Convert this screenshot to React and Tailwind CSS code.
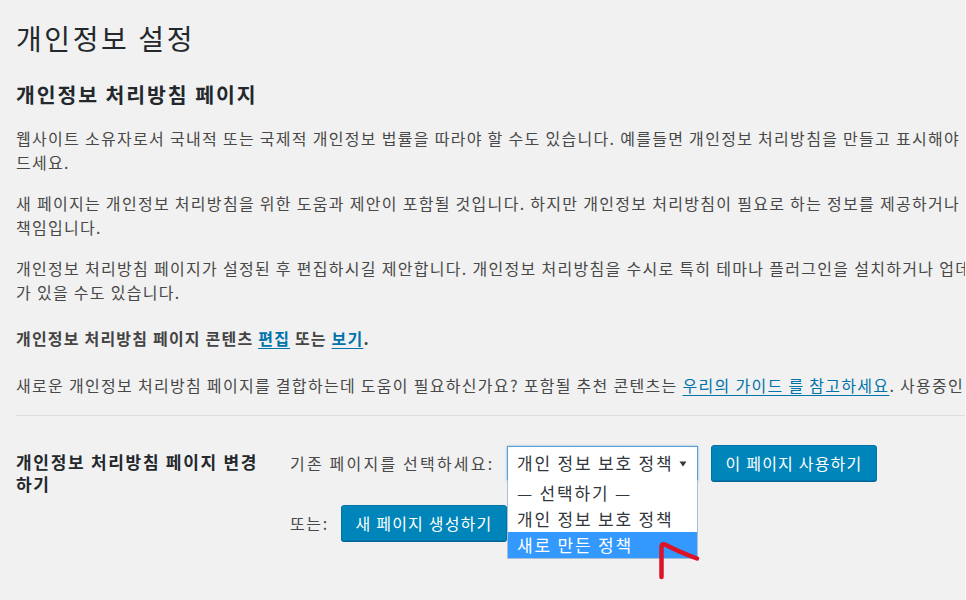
import React from "react";

const font = "font-['Noto_Sans_CJK_KR','Noto_Sans',sans-serif]";

function Para({ lines, className = "" }) {
  return (
    <p className={`whitespace-nowrap text-[16px] leading-[24px] tracking-[1.3px] text-[#484848] ${className}`}>
      {lines.map((l, i) => (
        <React.Fragment key={i}>
          {i > 0 && <br />}
          {l}
        </React.Fragment>
      ))}
    </p>
  );
}

export default function App() {
  return (
    <div className={`relative w-[966px] h-[600px] overflow-hidden bg-[#f1f1f1] ${font}`}>
      <div className="w-[1600px] pl-[16px]">
        <h1 className="mt-[20px] text-[28px] leading-[36px] tracking-[2.6px] font-normal text-[#23282d]">개인정보 설정</h1>
        <h2 className="mt-[24px] text-[20.5px] leading-[28px] tracking-[1.9px] font-bold text-[#23282d]">개인정보 처리방침 페이지</h2>

        <Para
          className="mt-[18px]"
          lines={[
            "웹사이트 소유자로서 국내적 또는 국제적 개인정보 법률을 따라야 할 수도 있습니다. 예를들면 개인정보 처리방침을 만들고 표시해야 할 수도 있습니다. 이미 개인정보 처리방침 페이지가 있다면 아래에서 선택해 주세요. 그렇지 않다면 새로 만",
            "드세요.",
          ]}
        />
        <Para
          className="mt-[17px]"
          lines={[
            "새 페이지는 개인정보 처리방침을 위한 도움과 제안이 포함될 것입니다. 하지만 개인정보 처리방침이 필요로 하는 정보를 제공하거나 그 정보를 최신 상태로 유지하는 것은 사용자의",
            "책임입니다.",
          ]}
        />
        <Para
          className="mt-[17px]"
          lines={[
            "개인정보 처리방침 페이지가 설정된 후 편집하시길 제안합니다. 개인정보 처리방침을 수시로 특히 테마나 플러그인을 설치하거나 업데이트한 후 검토해야 합니다. 추가해야 할 정보나 변경 사항",
            "가 있을 수도 있습니다.",
          ]}
        />
        <p className="mt-[22px] whitespace-nowrap text-[16px] leading-[24px] tracking-[1.2px] font-bold text-[#444]">
          개인정보 처리방침 페이지 콘텐츠{" "}
          <a className="text-[#0073aa] underline underline-offset-[3px]">편집</a> 또는{" "}
          <a className="text-[#0073aa] underline underline-offset-[3px]">보기</a>.
        </p>
        <p className="mt-[23px] whitespace-nowrap text-[16px] leading-[24px] tracking-[1.3px] text-[#484848]">
          새로운 개인정보 처리방침 페이지를 결합하는데 도움이 필요하신가요? 포함될 추천 콘텐츠는{" "}
          <a className="text-[#0073aa] underline underline-offset-[3px]">우리의 가이드 를 참고하세요</a>. 사용중인 플러그인과 테마에 대한 정보도 확인하실 수 있습니다.
        </p>

        <div className="mt-[18px] h-px bg-[#dddddd]" />

        <div className="mt-[29px] flex">
          <div className="w-[274px] pt-[6px] text-[17px] leading-[22px] tracking-[1.7px] font-bold text-[#23282d]">
            개인정보 처리방침 페이지 변경
            <br />
            하기
          </div>
          <div className="flex flex-col">
            <div className="flex items-center">
              <span className="w-[217px] whitespace-nowrap text-[16px] tracking-[2.2px] text-[#484848]">기존 페이지를 선택하세요:</span>
              <div className="relative">
                <div className="flex h-[35px] w-[191px] items-center justify-between border border-[#5b9dd9] bg-white pl-[9px] pr-[10px] shadow-[0_0_2px_rgba(30,140,190,0.6)]">
                  <span className="whitespace-nowrap text-[17px] tracking-[1.8px] text-[#32373c]">개인 정보 보호 정책</span>
                  <svg width="8" height="6" viewBox="0 0 8 6" className="mt-[1px]">
                    <path d="M0.5 0.5 L7.5 0.5 L4 5.5 Z" fill="#32373c" />
                  </svg>
                </div>
                <div className="absolute left-0 top-[34px] z-10 w-[191px] border border-[#a8bfd6] border-t-0 bg-white">
                  <div className="h-[26px] whitespace-nowrap pl-[9px] text-[17px] leading-[26px] tracking-[1.8px] text-[#32373c]">— 선택하기 —</div>
                  <div className="h-[26px] whitespace-nowrap pl-[9px] text-[17px] leading-[26px] tracking-[1.8px] text-[#32373c]">개인 정보 보호 정책</div>
                  <div className="h-[26px] whitespace-nowrap bg-[#3399ff] pl-[9px] text-[17px] leading-[26px] tracking-[1.8px] text-white">새로 만든 정책</div>
                </div>
              </div>
              <button className="ml-[13px] h-[36px] w-[166px] rounded-[3px] border border-[#0073aa] bg-[#0085ba] text-[16px] tracking-[1.2px] text-white shadow-[0_1px_0_#006799]">
                이 페이지 사용하기
              </button>
            </div>
            <div className="mt-[24px] flex items-center">
              <span className="w-[51px] text-[16px] tracking-[1.6px] text-[#484848]">또는:</span>
              <button className="h-[36px] w-[166px] rounded-[3px] border border-[#0073aa] bg-[#0085ba] text-[16px] tracking-[1.2px] text-white shadow-[0_1px_0_#006799]">
                새 페이지 생성하기
              </button>
            </div>
          </div>
        </div>
      </div>

      <svg className="pointer-events-none absolute left-[655px] top-[538px] z-20" width="50" height="45" viewBox="0 0 50 45">
        <path d="M6.5 39 L6.5 8 Q7 5 11 7 Q22 13 42 20.5" fill="none" stroke="#dc1428" strokeWidth="4.5" strokeLinecap="round" strokeLinejoin="round" />
      </svg>
      <div className="absolute right-0 top-0 h-full w-px bg-[#fafafa]" />
    </div>
  );
}
